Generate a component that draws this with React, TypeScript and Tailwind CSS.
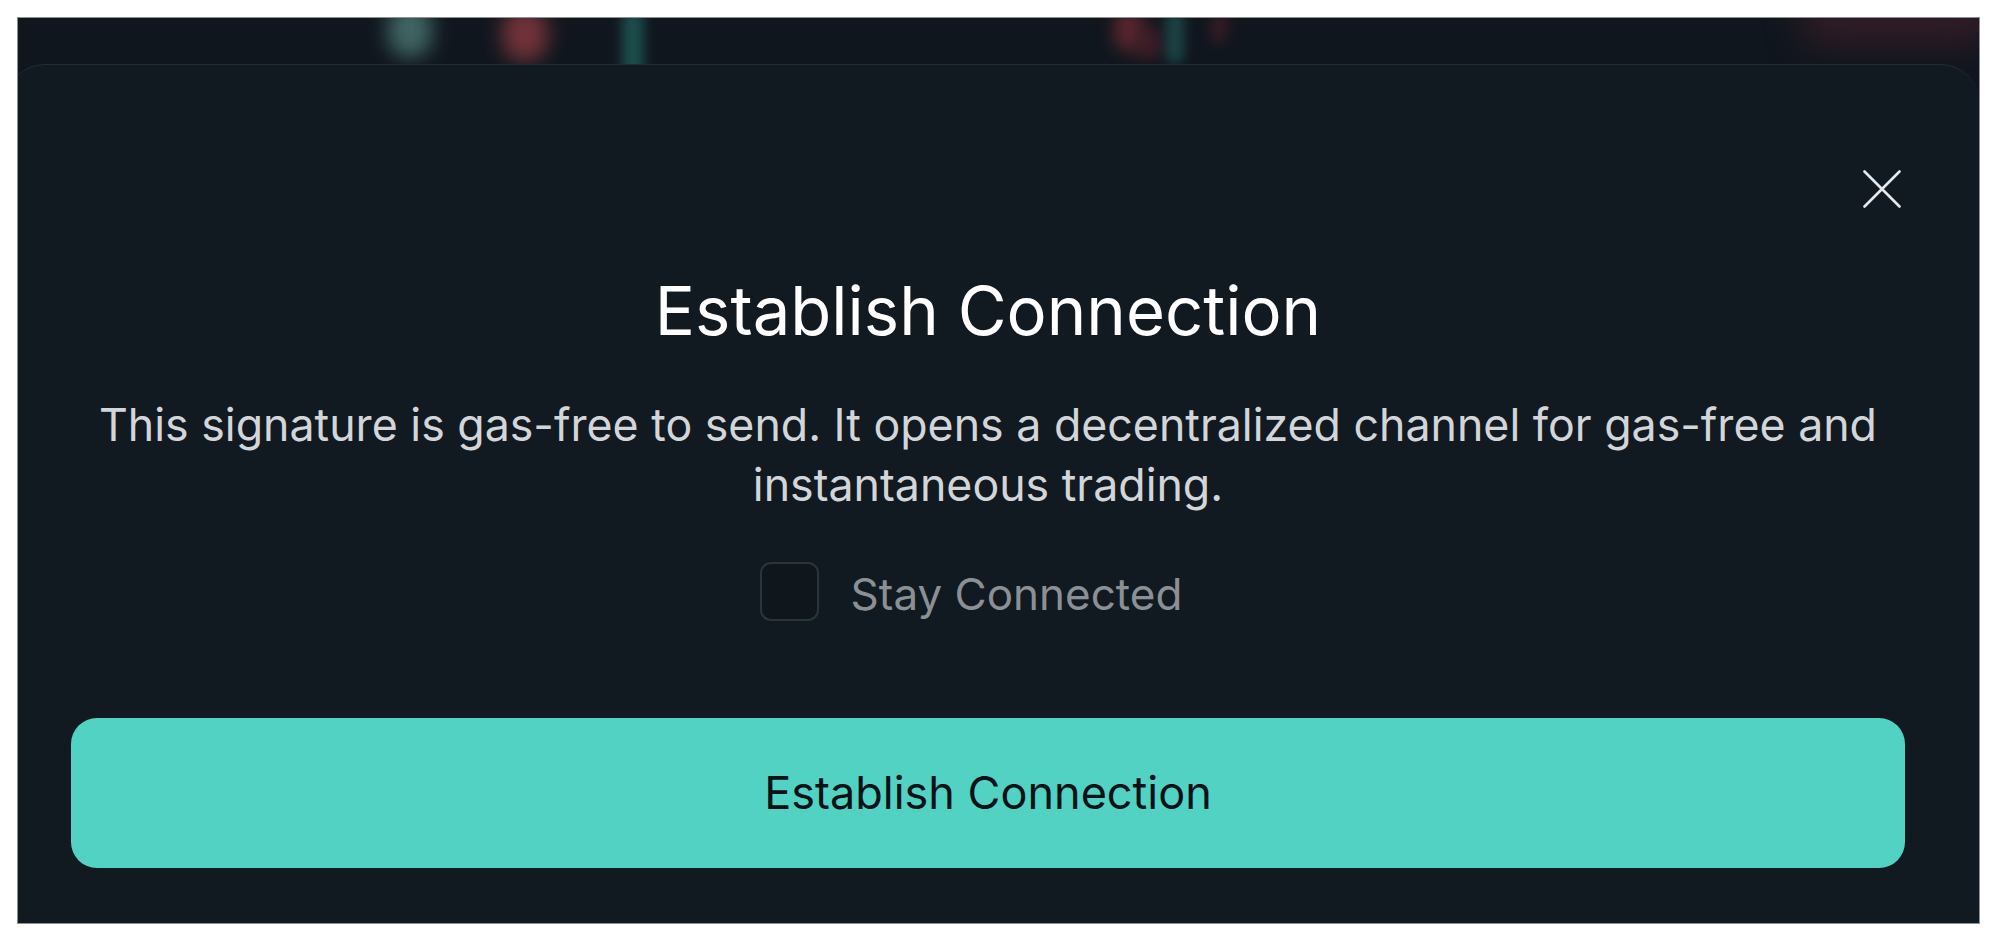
import React, { useState } from 'react';

// blurred chart candles peeking out above the modal
const glows = [
  { left: 'left-[370px]', top: '-top-[16px]', size: 'w-[44px] h-[56px]', color: 'bg-[#4b7a74]', blur: 'blur-[10px]' },
  { left: 'left-[484px]', top: '-top-[12px]', size: 'w-[46px] h-[56px]', color: 'bg-[#8a3a40]', blur: 'blur-[10px]' },
  { left: 'left-[604px]', top: '-top-[10px]', size: 'w-[22px] h-[76px]', color: 'bg-[#1f5a57]', blur: 'blur-[6px]' },
  { left: 'left-[1096px]', top: '-top-[10px]', size: 'w-[30px] h-[44px]', color: 'bg-[#6a2a30]', blur: 'blur-[8px]' },
  { left: 'left-[1118px]', top: 'top-[8px]', size: 'w-[26px] h-[34px]', color: 'bg-[#4a2028]', blur: 'blur-[8px]' },
  { left: 'left-[1148px]', top: '-top-[10px]', size: 'w-[18px] h-[56px]', color: 'bg-[#1f5050]', blur: 'blur-[6px]' },
  { left: 'left-[1192px]', top: '-top-[10px]', size: 'w-[18px] h-[36px]', color: 'bg-[#3a1c24]', blur: 'blur-[6px]' },
  { left: 'left-[1780px]', top: '-top-[30px]', size: 'w-[200px] h-[56px]', color: 'bg-[#3a1e28]', blur: 'blur-[18px]' },
];

const CloseIcon = () => (
  <svg width="38" height="38" viewBox="0 0 38 38" fill="none">
    <path d="M1.5 1.5L36.5 36.5M36.5 1.5L1.5 36.5" stroke="#e6e8ea" strokeWidth="2.6" strokeLinecap="round" />
  </svg>
);

const ConnectModal: React.FC = () => {
  const [stay, setStay] = useState(false);

  return (
    <div className="relative flex-1 -ml-[13px] -mr-[1px] rounded-t-[40px] border-t border-[#222d33] bg-[#111a20] pl-[66px] pr-[75px] pt-[214px]">
      <button className="absolute top-[105px] right-[79px] flex items-center justify-center">
        <CloseIcon />
      </button>

      <div className="flex flex-col items-center">
        <h2 className="text-[67px] leading-[64px] font-normal text-white">Establish Connection</h2>
        <p className="mt-[52px] text-[44.7px] leading-[60px] text-[#d3d6d9] text-center">
          This signature is gas-free to send. It opens a decentralized channel for gas-free and
          <br />
          instantaneous trading.
        </p>

        <label className="mt-[43px] mr-[34px] flex items-center gap-[32px] cursor-pointer">
          <span
            onClick={() => setStay(!stay)}
            className="w-[59px] h-[59px] rounded-[11px] border-2 border-[#2a343b] bg-[#0f171d]"
          />
          <span className="text-[44px] leading-[60px] text-[#8b9095] mt-[6px]">Stay Connected</span>
        </label>
      </div>

      <button className="mt-[94px] w-full h-[150px] rounded-[26px] bg-[#51d2c2] text-[45px] text-[#0c1115] flex items-center justify-center">
        Establish Connection
      </button>
    </div>
  );
};

export default function App() {
  return (
    <div className="w-[2000px] h-[944px] bg-white pl-[17px] pt-[17px]" style={{ fontFamily: 'Inter, "Noto Sans", sans-serif' }}>
      <div className="relative w-[1963px] h-[907px] border border-[#8c9196] bg-[#10161e] overflow-hidden flex flex-col">
        <div className="relative h-[46px] shrink-0">
          {glows.map((g, i) => (
            <div key={i} className={`absolute rounded-full opacity-80 ${g.left} ${g.top} ${g.size} ${g.color} ${g.blur}`} />
          ))}
        </div>
        <ConnectModal />
      </div>
    </div>
  );
}
